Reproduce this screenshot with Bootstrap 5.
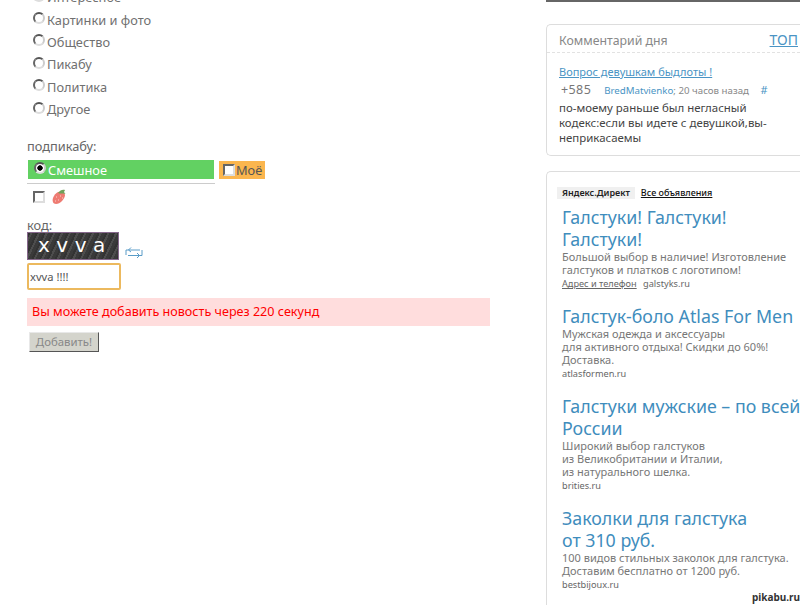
<!DOCTYPE html>
<html lang="ru">
<head>
  <meta charset="UTF-8">
  <title>Добавить новость</title>
  <link href="https://cdn.jsdelivr.net/npm/bootstrap@5.3.2/dist/css/bootstrap.min.css" rel="stylesheet">
  <style>
    html, body { height: 605px; overflow: hidden; }
    body { font-family: "Noto Sans", "DejaVu Sans", sans-serif; color: #666; background: #fff; font-size: 12.8px; line-height: 16px; }
    .page-wrap { width: 800px; height: 605px; overflow: hidden; }
    .left-col { width: 546px; flex: none; padding-left: 27px; }
    .right-col { width: 254px; flex: none; }
    .radio-list { margin-top: -14px; padding-left: 6px; }
    .radio-row { height: 22.4px; gap: 2px; color: #707070; }
    .old-radio { appearance: none; width: 12px; height: 12px; border-radius: 50%; margin: -3px 0 0 0; background: #fff; border: 2px solid; border-color: #555 #ccc #ddd #666; flex: none; }
    .old-radio.on { background: radial-gradient(circle, #000 0 2.4px, #fff 3px); }
    .old-check { appearance: none; width: 12px; height: 12px; margin: 0; background: #fff; border: 2px solid; border-color: #666 #ddd #ddd #666; flex: none; }
    .sub-label { margin-top: 18px; height: 16px; }
    .sub-row { margin-top: 6px; padding-left: 1px; gap: 5px; }
    .sub-main { width: 186px; height: 19px; background: #62d162; color: #fff; padding-left: 6px; gap: 2px; }
    .sub-mine { width: 46px; height: 18px; background: #fbb64e; padding-left: 4px; gap: 1px; color: #555; }
    .sub-line { width: 188px; border-top: 1px solid #ccc; margin: 4px 0 0 0; }
    .berry-row { height: 22px; padding-left: 6px; gap: 6px; margin-top: 2px; }
    .code-label { margin-top: 9px; height: 14px; }
    .captcha-row { gap: 6px; margin-top: 1px; }
    .captcha-row svg { margin-bottom: 2px; }
    .captcha-box { width: 92px; height: 28px; background: repeating-linear-gradient(115deg, #333 0 2px, #4d4d4d 2px 4px, #3a3a3a 4px 7px); border: 1px solid #86688c; color: #fff; font-size: 20px; line-height: 25px; letter-spacing: 6.5px; padding-left: 10px; font-family: "DejaVu Sans", sans-serif; overflow: hidden; }
    .code-input { display: block; width: 94px; height: 27px; margin-top: 3px; border: 2px solid #ecb95e; border-radius: 2px; padding: 0 1px; font: 11.2px/23px "Noto Sans", sans-serif; color: #555; outline: none; }
    .error-bar { width: 463px; height: 28px; margin-top: 8px; background: #ffdddd; color: #f00; padding-left: 5px; line-height: 28px; font-size: 12.6px; }
    .add-btn { display: block; width: 70px; height: 20px; margin: 6px 0 0 2px; padding: 0; background: #d4d4cc; color: #888; font-size: 11.4px; line-height: 18px; border: 1px solid; border-color: #e8e8e8 #555 #555 #e8e8e8; border-radius: 0; }
    .top-rule { height: 2px; background: #666; }
    .side-box { border: 1px solid #ddd; border-right: 0; border-radius: 5px 0 0 5px; }
    .day-box { margin-top: 22px; height: 132px; }
    .day-head { height: 28px; padding: 7px 0 0 12px; border-bottom: 1px dashed #e2e2e2; white-space: nowrap; color: #888; font-size: 12.3px; overflow: hidden; }
    .day-head a { margin-left: 102px; color: #4a94c4; font-size: 14px; }
    .day-body { padding: 10px 0 0 12px; white-space: nowrap; }
    .blue-link { color: #4a94c4; font-size: 11px; }
    .meta-row { margin-top: 2px; height: 17px; font-size: 9.7px; color: #888; }
    .meta-row b { font-weight: 400; font-size: 12.5px; color: #777; margin: 0 13px 0 2px; letter-spacing: .4px; }
    .meta-row a { color: #4a94c4; text-decoration: none; }
    .meta-row .hash { margin-left: 9px; font-size: 11px; }
    .day-text { font-size: 11.45px; line-height: 15px; color: #444; margin-top: 1px; }
    .direct-box { margin-top: 15px; height: 460px; padding: 15px 0 0 10px; overflow: hidden; }
    .direct-tag { background: #f0f0f0; color: #222; font-size: 9px; line-height: 12px; padding: 0 5px; font-weight: 600; margin-right: 6px; }
    .direct-all { color: #111; font-size: 9px; line-height: 12px; font-weight: 500; }
    .ad-item { margin: 0 0 0 5px; width: 240px; font-size: 11px; line-height: 13px; color: #777; }
    .ad-item + .ad-item { margin-top: 15px; }
    .ad-first { margin-top: 7px; }
    .ad-title { display: block; width: 260px; color: #3f8dbd; font-size: 17.8px; line-height: 22px; text-decoration: none; }
    .ad-small { font-size: 9.2px; line-height: 13px; margin-top: 1px; color: #666; }
    .ad-small a { color: #666; margin-right: 4px; }
    .water-mark { position: absolute; right: 0; bottom: 1px; font: 700 10px/13px "Noto Sans", sans-serif; color: #333; text-shadow: 0 0 2px #fff; }
  </style>
</head>
<body>
  <div class="page-wrap d-flex position-relative">
    <div class="left-col">
      <div class="radio-list">
        <div class="radio-row d-flex align-items-center"><input class="old-radio" type="radio" name="cat"><span>Интересное</span></div>
        <div class="radio-row d-flex align-items-center"><input class="old-radio" type="radio" name="cat"><span>Картинки и фото</span></div>
        <div class="radio-row d-flex align-items-center"><input class="old-radio" type="radio" name="cat"><span>Общество</span></div>
        <div class="radio-row d-flex align-items-center"><input class="old-radio" type="radio" name="cat"><span>Пикабу</span></div>
        <div class="radio-row d-flex align-items-center"><input class="old-radio" type="radio" name="cat"><span>Политика</span></div>
        <div class="radio-row d-flex align-items-center"><input class="old-radio" type="radio" name="cat"><span>Другое</span></div>
      </div>

      <div class="sub-label">подпикабу:</div>
      <div class="sub-row d-flex align-items-center">
        <div class="sub-main d-flex align-items-center"><input class="old-radio on" type="radio" name="sub"><span>Смешное</span></div>
        <div class="sub-mine d-flex align-items-center"><input class="old-check" type="checkbox"><span>Моё</span></div>
      </div>
      <hr class="sub-line opacity-100">
      <div class="berry-row d-flex align-items-center">
        <input class="old-check" type="checkbox">
        <svg width="15" height="16" viewBox="0 0 15 16">
          <path d="M7 3C10 2 14 3 14 6C14 10 9 15 5 15C2 15 1 12 2 9C3 6 5 4 7 3Z" fill="#ee7b72"/>
          <path d="M7 4C9 1 12 0 14 1L13 3L14.500 5C12 4 9 5 7 4Z" fill="#6fa25a"/>
          <path d="M5 8h1M9 7h1M7 11h1M4 12h1M11 9h1" stroke="#fbd0c8" stroke-width="1"/>
        </svg>
      </div>

      <div class="code-label">код:</div>
      <div class="captcha-row d-flex align-items-end">
        <div class="captcha-box">xvva</div>
        <svg width="18" height="11" viewBox="0 0 18 11" fill="none" stroke="#5a9cc8" stroke-width="1">
          <path d="M1 8V3H15M6 0.500L3.500 3L6 5"/>
          <path d="M17 3V8.500H3M12 6L14.500 8.500L12 11"/>
        </svg>
      </div>
      <input class="code-input" type="text" value="xvva !!!!">
      <div class="error-bar">Вы можете добавить новость через 220 секунд</div>
      <button class="add-btn" type="button">Добавить!</button>
    </div>

    <div class="right-col">
      <div class="top-rule"></div>
      <div class="side-box day-box">
        <div class="day-head">Комментарий дня<a href="#">ТОП</a></div>
        <div class="day-body">
          <a class="blue-link" href="#">Вопрос девушкам быдлоты !</a>
          <div class="meta-row"><b>+585</b><a href="#">BredMatvienko</a>; 20 часов назад <a class="hash" href="#">#</a></div>
          <div class="day-text">по-моему раньше был негласный<br>кодекс:если вы идете с девушкой,вы-<br>неприкасаемы</div>
        </div>
      </div>
      <div class="side-box direct-box">
        <div class="d-flex"><span class="direct-tag">Яндекс.Директ</span><a class="direct-all" href="#">Все объявления</a></div>
        <div class="ad-item ad-first">
          <a class="ad-title" href="#">Галстуки! Галстуки!<br>Галстуки!</a>
          Большой выбор в наличие! Изготовление<br>галстуков и платков с логотипом!
          <div class="ad-small"><a href="#">Адрес и телефон</a> galstyks.ru</div>
        </div>
        <div class="ad-item">
          <a class="ad-title" href="#">Галстук-боло Atlas For Men</a>
          Мужская одежда и аксессуары<br>для активного отдыха! Скидки до 60%!<br>Доставка.
          <div class="ad-small">atlasformen.ru</div>
        </div>
        <div class="ad-item">
          <a class="ad-title" href="#">Галстуки мужские – по всей<br>России</a>
          Широкий выбор галстуков<br>из Великобритании и Италии,<br>из натурального шелка.
          <div class="ad-small">brities.ru</div>
        </div>
        <div class="ad-item">
          <a class="ad-title" href="#">Заколки для галстука<br>от 310 руб.</a>
          100 видов стильных заколок для галстука.<br>Доставим бесплатно от 1200 руб.
          <div class="ad-small">bestbijoux.ru</div>
        </div>
      </div>
    </div>
    <div class="water-mark">pikabu.ru</div>
  </div>
  <script src="https://cdn.jsdelivr.net/npm/bootstrap@5.3.2/dist/js/bootstrap.bundle.min.js"></script>
</body>
</html>
